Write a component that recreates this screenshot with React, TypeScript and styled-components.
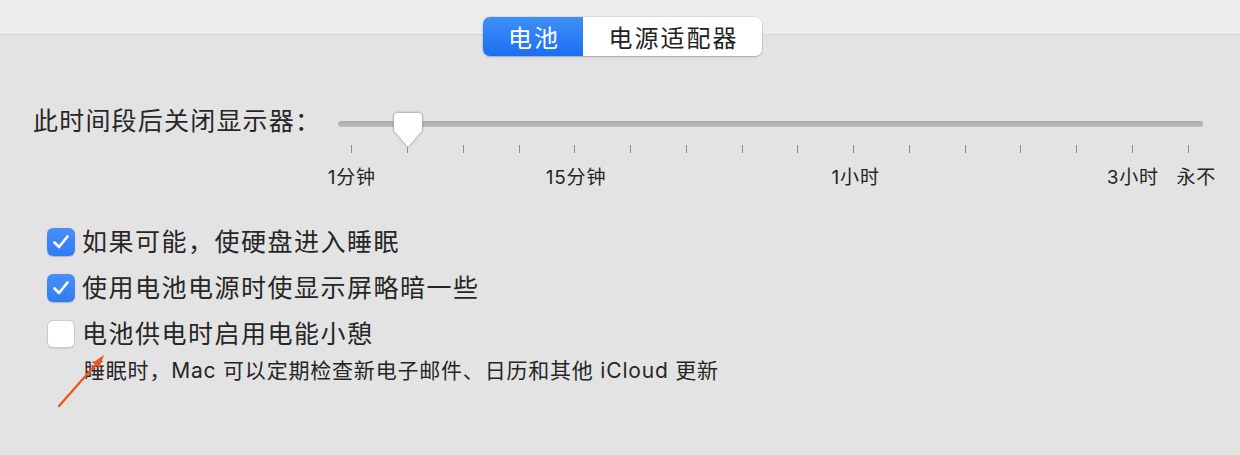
import React from "react";
import styled, { createGlobalStyle } from "styled-components";

const GlobalStyle = createGlobalStyle`
  html, body { margin: 0; padding: 0; }
  body {
    width: 1240px;
    height: 455px;
    overflow: hidden;
    background: linear-gradient(#ececec 0, #ececec 34px, #d6d6d6 34px, #d6d6d6 35px, #e3e3e3 35px);
    font-family: Inter, "Noto Sans CJK SC", sans-serif;
    color: #262626;
  }
`;

const Page = styled.div`
  position: relative;
  width: 1240px;
  height: 455px;
  display: flex;
  flex-direction: column;
`;

const TabBar = styled.div`
  display: flex;
  justify-content: center;
  padding-top: 17px;
  padding-left: 5px;
`;

const Segmented = styled.div`
  display: flex;
  height: 39px;
  border-radius: 7px;
  overflow: hidden;
  box-shadow: 0 0 0 0.5px rgba(0, 0, 0, 0.12), 0 1px 2px rgba(0, 0, 0, 0.22);
`;

const Segment = styled.div<{ $active?: boolean; $w: number }>`
  width: ${(p) => p.$w}px;
  display: flex;
  align-items: center;
  justify-content: center;
  font-size: 24px;
  letter-spacing: 2px;
  padding-left: 2px;
  box-sizing: border-box;
  color: ${(p) => (p.$active ? "#ffffff" : "#222222")};
  background: ${(p) =>
    p.$active ? "linear-gradient(#3e90f8, #1b6ef1)" : "#ffffff"};
`;

const SliderRow = styled.div`
  display: flex;
  align-items: flex-start;
  padding-top: 50px;
  padding-left: 33px;
`;

const RowLabel = styled.div`
  width: 291px;
  font-size: 25px;
  line-height: 30px;
  letter-spacing: 1.2px;
  white-space: nowrap;
`;

const SliderBlock = styled.div`
  width: 892px;
  display: flex;
  flex-direction: column;
`;

const TrackArea = styled.div`
  position: relative;
  height: 36px;
  padding-top: 15px;
  padding-left: 14px;
  box-sizing: border-box;
`;

const Track = styled.div`
  width: 865px;
  height: 6px;
  border-radius: 3px;
  background: linear-gradient(#a9a9a9, #bdbdbd);
`;

const Knob = styled.svg`
  position: absolute;
  left: 69px;
  top: 6px;
  filter: drop-shadow(0 0.5px 1px rgba(0, 0, 0, 0.25));
`;

const Scale = styled.div`
  display: grid;
  grid-template-columns: repeat(16, 1fr);
  justify-items: center;
`;

const TickRow = styled(Scale)`
  margin-top: 3px;
  height: 8px;
`;

const Tick = styled.div`
  width: 1px;
  height: 8px;
  background: #8c8c8c;
`;

const LabelRow = styled(Scale)`
  margin-top: 12px;
  height: 26px;
`;

const ScaleLabel = styled.div<{ $col: number; $shift?: number }>`
  grid-column: ${(p) => p.$col} / span 1;
  font-size: 19px;
  line-height: 26px;
  letter-spacing: 0.8px;
  white-space: nowrap;
  transform: translateX(${(p) => p.$shift ?? 0}px);
`;

const Options = styled.div`
  display: flex;
  flex-direction: column;
  margin-top: 28px;
  padding-left: 47px;
`;

const OptionRow = styled.div`
  display: flex;
  align-items: center;
  gap: 7px;
  height: 46px;
`;

const Box = styled.div<{ $checked?: boolean }>`
  width: 28px;
  height: 28px;
  box-sizing: border-box;
  border-radius: 6px;
  display: flex;
  align-items: center;
  justify-content: center;
  background: ${(p) => (p.$checked ? "linear-gradient(#4a8ff8, #2f7cf5)" : "#ffffff")};
  border: ${(p) => (p.$checked ? "none" : "1px solid #cbcbcb")};
  box-shadow: ${(p) => (p.$checked ? "0 0.5px 1px rgba(0,0,0,0.2)" : "0 0.5px 1px rgba(0,0,0,0.08)")};
`;

const OptionText = styled.div`
  font-size: 25px;
  line-height: 30px;
  letter-spacing: 1.5px;
  white-space: nowrap;
`;

const Hint = styled.div`
  padding-left: 37px;
  font-size: 21px;
  line-height: 28px;
  letter-spacing: 0.8px;
  white-space: nowrap;
`;

const Arrow = styled.svg`
  position: absolute;
  left: 0;
  top: 0;
  pointer-events: none;
`;

const Check = () => (
  <svg width="28" height="28" viewBox="0 0 28 28">
    <path d="M7.5 14.5 L12 19 L20.5 8.5" fill="none" stroke="#fff" strokeWidth="2.6" strokeLinecap="round" strokeLinejoin="round" />
  </svg>
);

const Option = ({ checked, children }: { checked?: boolean; children: React.ReactNode }) => (
  <OptionRow>
    <Box $checked={checked}>{checked && <Check />}</Box>
    <OptionText>{children}</OptionText>
  </OptionRow>
);

export default function App() {
  return (
    <>
      <GlobalStyle />
      <Page>
        <TabBar>
          <Segmented>
            <Segment $active $w={100}>电池</Segment>
            <Segment $w={179}>电源适配器</Segment>
          </Segmented>
        </TabBar>
        <SliderRow>
          <RowLabel>此时间段后关闭显示器：</RowLabel>
          <SliderBlock>
            <TrackArea>
              <Track />
              <Knob width="30" height="40" viewBox="0 0 30 40">
                <path
                  d="M4.5 0.5 H25.5 Q29.5 0.5 29.5 4.5 V18.5 L15 35.5 L0.5 18.5 V4.5 Q0.5 0.5 4.5 0.5 Z"
                  fill="#ffffff"
                  stroke="rgba(0,0,0,0.18)"
                  strokeWidth="1"
                />
              </Knob>
            </TrackArea>
            <TickRow>
              {Array.from({ length: 16 }).map((_, i) => (
                <Tick key={i} />
              ))}
            </TickRow>
            <LabelRow>
              <ScaleLabel $col={1}>1分钟</ScaleLabel>
              <ScaleLabel $col={5}>15分钟</ScaleLabel>
              <ScaleLabel $col={10}>1小时</ScaleLabel>
              <ScaleLabel $col={15}>3小时</ScaleLabel>
              <ScaleLabel $col={16} $shift={8}>永不</ScaleLabel>
            </LabelRow>
          </SliderBlock>
        </SliderRow>
        <Options>
          <Option checked>如果可能，使硬盘进入睡眠</Option>
          <Option checked>使用电池电源时使显示屏略暗一些</Option>
          <Option>电池供电时启用电能小憩</Option>
          <Hint>睡眠时，Mac 可以定期检查新电子邮件、日历和其他 iCloud 更新</Hint>
        </Options>
        <Arrow width="1240" height="455" viewBox="0 0 1240 455">
          <line x1="59" y1="406" x2="98" y2="362" stroke="#f0561e" strokeWidth="2.4" strokeLinecap="round" />
          <polygon points="104,355 99.2,368 93,362.6" fill="#f0561e" />
        </Arrow>
      </Page>
    </>
  );
}
